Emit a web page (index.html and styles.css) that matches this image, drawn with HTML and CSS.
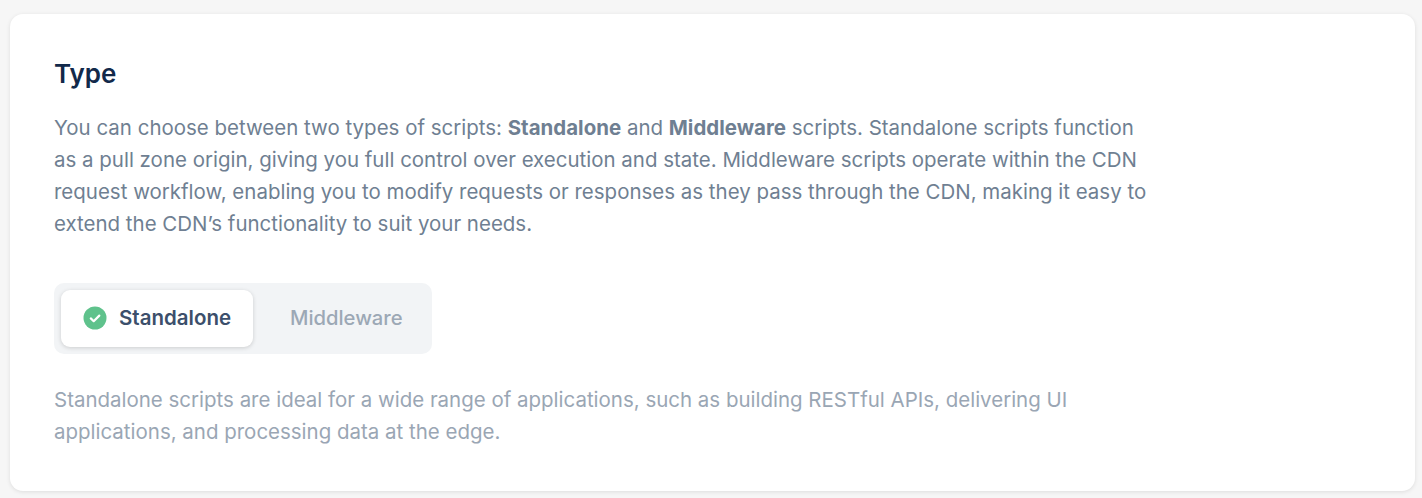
FILE: index.html
```html
<!DOCTYPE html>
<html lang="en">
<head>
    <meta charset="UTF-8">
    <meta name="viewport" content="width=device-width, initial-scale=1.0">
    <title>Script Type</title>

    <link rel="stylesheet" href="styles.css">
</head>
<body>
    <div class="card">
        <h2 class="card-title">Type</h2>
        <p class="intro">You can choose between two types of scripts: <strong>Standalone</strong> and <strong>Middleware</strong> scripts. Standalone scripts function<br>as a pull zone origin, giving you full control over execution and state. Middleware scripts operate within the CDN<br>request workflow, enabling you to modify requests or responses as they pass through the CDN, making it easy to<br>extend the CDN’s functionality to suit your needs.</p>

        <div class="switcher">
            <div class="switch-item active">
                <svg class="check" width="24" height="24" viewBox="0 0 24 24">
                    <circle cx="12" cy="12" r="11.5" fill="#5fc28c"></circle>
                    <path d="M7.8 12.4l2.9 2.8 5.6-5.6" fill="none" stroke="#fff" stroke-width="2.2" stroke-linecap="round" stroke-linejoin="round"></path>
                </svg>
                <span class="switch-label">Standalone</span>
            </div>
            <div class="switch-item"><span class="switch-label">Middleware</span></div>
        </div>

        <p class="hint">Standalone scripts are ideal for a wide range of applications, such as building RESTful APIs, delivering UI<br>applications, and processing data at the edge.</p>
    </div>
</body>
</html>
```

FILE: styles.css
```css
html, body {
    height: 100%;
}

body {
    margin: 0;
    padding: 14px 7px 0 10px;
    box-sizing: border-box;
    overflow: hidden;
    font-family: Inter, "Liberation Sans", sans-serif;
    background-color: #f6f6f6;
}

.card {
    height: 477px;
    box-sizing: border-box;
    padding: 44px 44px 0;
    background-color: #fff;
    border-radius: 13px;
    box-shadow: 0 1px 4px rgba(0, 0, 0, 0.1);
}

.card-title {
    margin: 0 0 22px;
    font-size: 26px;
    line-height: 32px;
    font-weight: 600;
    color: #12294a;
}

.intro {
    margin: 0 0 43px;
    font-size: 20.48px;
    line-height: 32px;
    color: #6f7f92;
    white-space: nowrap;
}

.intro strong {
    font-weight: 700;
}

.switcher {
    display: flex;
    width: 378px;
    height: 71px;
    box-sizing: border-box;
    padding: 7px;
    background-color: #f2f4f6;
    border-radius: 10px;
}

.switch-item {
    display: flex;
    align-items: center;
    gap: 12px;
    padding: 0 37px;
    font-size: 20.2px;
    font-weight: 500;
    color: #9ca8b5;
}

.switch-label {
    margin-bottom: 2px;
}

.check {
    margin-bottom: 2px;
}

.switch-item.active {
    padding: 0 22px;
    font-size: 20.5px;
    font-weight: 600;
    color: #3c4f6b;
    background-color: #fff;
    border-radius: 9px;
    box-shadow: 0 1px 4px rgba(0, 0, 0, 0.16);
}

.hint {
    margin: 30px 0 0;
    font-size: 20.48px;
    line-height: 32px;
    color: #9aa6b4;
    white-space: nowrap;
}
```
